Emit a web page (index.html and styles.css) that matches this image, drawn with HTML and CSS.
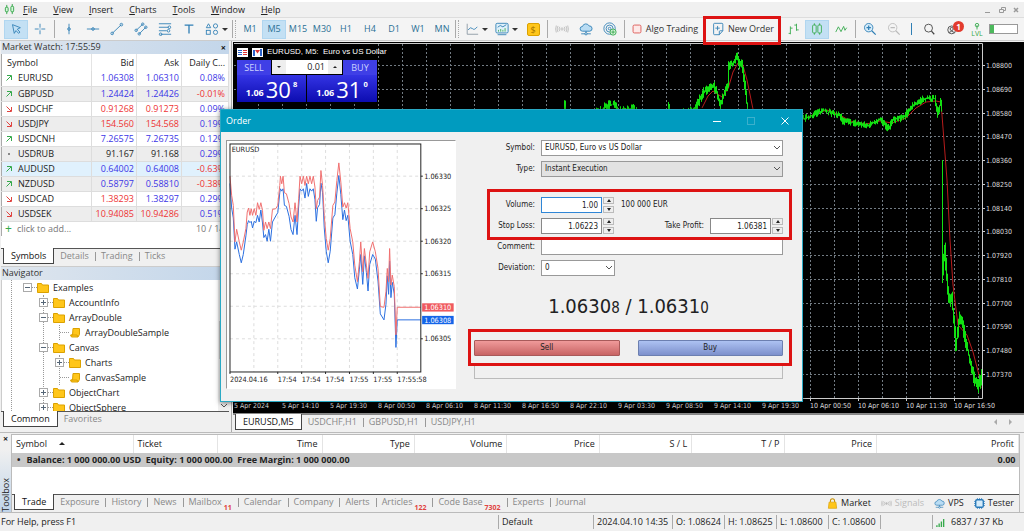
FILE: index.html
```html
<!DOCTYPE html>
<html lang="en">
<head>
  <meta charset="UTF-8" />
  <meta name="viewport" content="width=device-width, initial-scale=1.0" />
  <title>Trading Terminal</title>
  <link rel="stylesheet" href="styles.css">
</head>
<body>
  <svg class="defs" aria-hidden="true">
    <symbol id="folder" viewBox="0 0 12 11"><path d="M.5 1.5h4l1 1.5h6v7.5H.5z" fill="#ffc61a" stroke="#dba100" /></symbol>
    <symbol id="script" viewBox="0 0 12 11"><path d="M4 1.5h6.5v6L9 10H2.500L1.500 8h2z" fill="#ffc61a" stroke="#dba100" /><path d="M2 8h6l1 2" fill="none" stroke="#dba100" /></symbol>
    <symbol id="up" viewBox="0 0 8 8"><path d="M1.500 6.500L6 2M2 1.500h4.500V6" fill="none" stroke="#35a94b" /></symbol>
    <symbol id="down" viewBox="0 0 8 8"><path d="M1.500 1.500L6 6M6.500 2v4.500H2" fill="none" stroke="#e0433f" /></symbol>
    <symbol id="flat" viewBox="0 0 8 8"><rect x="3" y="3" width="2" height="2" fill="#888" /></symbol>
    <symbol id="chevron" viewBox="0 0 8 6"><path d="M1 1l3 3 3-3" fill="none" stroke="#555" /></symbol>
    <symbol id="cloud" viewBox="0 0 16 16"><path d="M4 10.500a2.700 2.700 0 0 1 0-5.400A4 4 0 0 1 11.500 4.500a3 3 0 0 1 .8 6z" fill="#b9dcf3" stroke="#2f7fb5" /><path d="M8 10.500v3M2.500 13.500h11" stroke="#2f7fb5" fill="none" /><circle cx="8" cy="13.500" r="1.300" fill="#fff" stroke="#2f7fb5" /></symbol>
    <symbol id="signal" viewBox="0 0 16 16"><circle cx="8" cy="8" r="1.300" /><path d="M5.500 5.500q-1.800 2.500 0 5M10.500 5.500q1.800 2.500 0 5M3.500 4.500q-2.200 3.500 0 7M12.500 4.500q2.200 3.500 0 7M1.500 4q-1.500 4 0 8M14.500 4q1.500 4 0 8" fill="none" /></symbol>
  </svg>

  <div class="app">
    <nav class="menubar">
      <svg class="logo" viewBox="0 0 12 12"><path d="M3 1v10M9 0v11" /><rect x="1.500" y="3.500" width="3" height="5" rx="1" /><rect x="7.500" y="2.500" width="3" height="6" rx="1" /></svg>
      <a href="#"><u>F</u>ile</a>
      <a href="#"><u>V</u>iew</a>
      <a href="#"><u>I</u>nsert</a>
      <a href="#"><u>C</u>harts</a>
      <a href="#"><u>T</u>ools</a>
      <a href="#"><u>W</u>indow</a>
      <a href="#"><u>H</u>elp</a>
      <div class="window-controls">
        <button aria-label="Minimize"><svg viewBox="0 0 8 8"><path d="M1 6.500h5" /></svg></button>
        <button aria-label="Restore"><svg viewBox="0 0 8 8"><path d="M3.500 3V1.500h4v3H6M1.500 3.500h4v3h-4z" /></svg></button>
        <button aria-label="Close"><svg viewBox="0 0 8 8"><path d="M2 2l4 4M6 2L2 6" stroke-width="1.500" /></svg></button>
      </div>
    </nav>

    <div class="toolbar">
      <button class="tool active" aria-label="Cursor"><svg viewBox="0 0 16 16"><path d="M4 3l9 3.500-3.500 1.800 3 3.200-1.500 1.500-3-3.200L6 13z" /></svg></button>
      <button class="tool" aria-label="Crosshair"><svg viewBox="0 0 16 16"><path d="M8 2v4.500M8 9.500V14M2 8h4.500M9.500 8H14M8 7.500v1" /></svg></button>
      <span class="sep"></span>
      <button class="tool" aria-label="Vertical line"><svg viewBox="0 0 16 16"><path d="M8 2v12" /><circle cx="8" cy="8" r="1.500" /></svg></button>
      <button class="tool" aria-label="Horizontal line"><svg viewBox="0 0 16 16"><path d="M1 8h14" /><circle cx="8" cy="8" r="1.500" /></svg></button>
      <button class="tool" aria-label="Trendline"><svg viewBox="0 0 16 16"><path d="M2.500 13L13 3" /><circle cx="2.500" cy="13" r="1.500" /><circle cx="13" cy="3" r="1.500" /></svg></button>
      <button class="tool" aria-label="Channel"><svg viewBox="0 0 16 16"><path d="M2.500 9.500L10 2.500M6 13.500L13.500 6" /><circle cx="2.500" cy="9.500" r="1.400" /><circle cx="10" cy="2.500" r="1.400" /><circle cx="6" cy="13.500" r="1.400" /><circle cx="13.500" cy="6" r="1.400" /></svg></button>
      <button class="tool" aria-label="Fibonacci"><svg viewBox="0 0 16 16"><path d="M1 2h14M1 6h11M1 10h9M3 14h12" /><circle cx="13" cy="6" r="1.500" /><circle cx="3" cy="14" r="1.500" /><circle cx="12" cy="10" r="1.500" /></svg></button>
      <button class="tool" aria-label="Text"><svg viewBox="0 0 16 16"><path d="M3 3.500h10M8 3.500V13" stroke-width="1.500" /></svg></button>
      <button class="tool drop" aria-label="Shapes"><svg viewBox="0 0 16 16"><path d="M4 2l2.500 4.500h-5z" /><circle cx="12" cy="4.500" r="2.400" /><rect x="1.500" y="9.500" width="4.500" height="4.500" /><circle cx="12" cy="11.800" r="2.400" /></svg><i class="caret"></i></button>
      <span class="grip"></span>
      <button class="tool frame">M1</button>
      <button class="tool frame active">M5</button>
      <button class="tool frame">M15</button>
      <button class="tool frame">M30</button>
      <button class="tool frame">H1</button>
      <button class="tool frame">H4</button>
      <button class="tool frame">D1</button>
      <button class="tool frame">W1</button>
      <button class="tool frame">MN</button>
      <span class="grip"></span>
      <button class="tool drop" aria-label="Chart type"><svg viewBox="0 0 16 16"><path d="M2.500 2v12H15" stroke="#8a98a4" /><path d="M3.500 9q3-4 5-1.500t5.500-2" /></svg><i class="caret"></i></button>
      <button class="tool drop" aria-label="Indicators"><svg viewBox="0 0 16 16"><rect x="1" y="1.500" width="14" height="11" rx="1.500" fill="#dff0fa" /><path d="M3 14.500h10" /><path d="M3 6l3-2 3 1.500L13 3" /><path d="M4 11V9M6.500 11V8M9 11V9M11.500 11V7" stroke="#3fae55" /></svg><i class="caret"></i></button>
      <button class="tool money" aria-label="Depth of market"><span>$</span></button>
      <span class="sep"></span>
      <button class="tool muted" aria-label="Signals"><svg viewBox="0 0 16 16"><use href="#signal" /></svg></button>
      <button class="tool" aria-label="Virtual hosting"><svg viewBox="0 0 16 16"><use href="#cloud" /></svg></button>
      <button class="tool" aria-label="Add service"><svg viewBox="0 0 16 16"><circle cx="7.500" cy="7.500" r="6.500" /><circle cx="7.500" cy="7.500" r="4" /><circle cx="7.500" cy="7.500" r="1.500" /><circle cx="11.500" cy="11.500" r="3.500" fill="#d5f3d8" stroke="#35a94b" /><path d="M9.500 11.500h4M11.500 9.500v4" stroke="#35a94b" /></svg></button>
      <span class="sep"></span>
      <button class="tool wide algo"><svg viewBox="0 0 16 16"><rect x="3.500" y="3.500" width="9" height="9" rx="1.500" fill="#fde9e8" stroke="#dc5350" /></svg>Algo Trading</button>
      <button class="tool wide new-order"><svg viewBox="0 0 16 16"><path d="M4 1.500h8.500q1 0 1 1V10l-4 4.500H4q-1 0-1-1v-11q0-1 1-1zM13.500 10h-3q-1 0-1 1v3.500M7.500 4.500v5M5 7h5" /></svg>New Order</button>
      <button class="tool green" aria-label="Bars"><svg viewBox="0 0 16 16"><path d="M5 5v9M5 7h2.500M3 13h2M12 2v8M9.500 3.500H12M12 9h2.500" /></svg></button>
      <button class="tool green active" aria-label="Candles"><svg viewBox="0 0 16 16"><path d="M5 1.500v13M11 1.500v13" /><rect x="3" y="3.500" width="4" height="9" rx="1" fill="#cfe8f8" /><rect x="9" y="3.500" width="4" height="9" rx="1" fill="#cfe8f8" /></svg></button>
      <button class="tool green" aria-label="Line"><svg viewBox="0 0 16 16"><path d="M2 11.500L5 5.500l3 5.500 3-6 1.500 4.500 2-3" /></svg></button>
      <span class="sep"></span>
      <button class="tool" aria-label="Zoom in"><svg viewBox="0 0 16 16"><circle cx="6.500" cy="6.500" r="4.800" fill="#d6ecfa" /><path d="M10 10l4.500 4.500M4 6.500h5M6.500 4v5" stroke-width="1.400" /></svg></button>
      <button class="tool muted" aria-label="Zoom out"><svg viewBox="0 0 16 16"><circle cx="6.500" cy="6.500" r="4.800" /><path d="M10 10l4.500 4.500M4 6.500h5" stroke-width="1.400" /></svg></button>
      <span class="sep blue"></span>
      <button class="tool dark" aria-label="Search"><svg viewBox="0 0 16 16"><circle cx="7.500" cy="7" r="4.500" /><path d="M10.800 10.500L14 14" stroke-width="1.400" /></svg></button>
      <button class="tool dark news" aria-label="Notifications"><svg viewBox="0 0 16 16"><circle cx="6.500" cy="9" r="4.500" /><circle cx="6.500" cy="8" r="1.800" /><path d="M3.500 12q3-3 6 0" /></svg><b class="badge">1</b></button>
      <button class="tool green lvl" aria-label="Level"><svg viewBox="0 0 16 8"><circle cx="8" cy="3" r="2" /><path d="M8 3v5" /></svg><span>LVL</span></button>
      <progress class="level" max="100" value="14" aria-label="Level progress"></progress>
    </div>

    <div class="workspace">
      <aside class="sidebar">
        <section class="panel">
          <h2 class="panel-title">Market Watch: 17:55:59 <button aria-label="Close Market Watch">×</button></h2>
          <table class="quotes">
            <thead><tr><th>Symbol</th><th>Bid</th><th>Ask</th><th>Daily C...</th></tr></thead>
            <tbody id="quotes"></tbody>
            <tfoot><tr><td colspan="2"><span class="plus">+</span>click to add...</td><td colspan="2">10 / 14</td></tr></tfoot>
          </table>
          <div class="tabs market-tabs">
            <button class="tab active">Symbols</button><button class="tab">Details</button><button class="tab">Trading</button><button class="tab">Ticks</button>
          </div>
        </section>

        <section class="panel navigator">
          <h2 class="panel-title">Navigator</h2>
          <div class="tree-view">
            <ul class="tree">
              <li><div class="node"><i class="box minus"></i><i class="dash"></i><svg><use href="#folder" /></svg>Examples</div>
                <ul>
                  <li><div class="node"><i class="box"></i><i class="dash"></i><svg><use href="#folder" /></svg>AccountInfo</div></li>
                  <li><div class="node"><i class="box minus"></i><i class="dash"></i><svg><use href="#folder" /></svg>ArrayDouble</div>
                    <ul>
                      <li><div class="node leaf"><i class="dash"></i><svg><use href="#script" /></svg>ArrayDoubleSample</div></li>
                    </ul>
                  </li>
                  <li><div class="node"><i class="box minus"></i><i class="dash"></i><svg><use href="#folder" /></svg>Canvas</div>
                    <ul>
                      <li><div class="node"><i class="box"></i><i class="dash"></i><svg><use href="#folder" /></svg>Charts</div></li>
                      <li><div class="node leaf"><i class="dash"></i><svg><use href="#script" /></svg>CanvasSample</div></li>
                    </ul>
                  </li>
                  <li><div class="node"><i class="box"></i><i class="dash"></i><svg><use href="#folder" /></svg>ObjectChart</div></li>
                  <li><div class="node"><i class="box"></i><i class="dash"></i><svg><use href="#folder" /></svg>ObjectSphere</div></li>
                </ul>
              </li>
            </ul>
            <div class="scrollbar"><i></i><svg viewBox="0 0 8 6"><use href="#chevron" /></svg></div>
          </div>
          <div class="tabs">
            <button class="tab active">Common</button><button class="tab">Favorites</button>
          </div>
        </section>
      </aside>

      <main class="chart-area">
        <div class="chart">
          <svg id="chart" viewBox="233 42 791 371" preserveAspectRatio="xMinYMin meet"></svg>
          <div class="one-click">
            <div class="chart-name">
              <svg viewBox="0 0 26 9"><rect width="11" height="9" fill="#fff" /><path d="M1 2.500h4M1 4.500h4M1 6.500h4" stroke="#2b62c9" /><path d="M6 2.500h4M6 4.500h4M6 6.500h4" stroke="#d33" /><rect x="15" width="11" height="9" fill="#fff" /><path d="M17 2v6M24 1v7" stroke="#2b62c9" stroke-width="2" /><path d="M18 2h5l-2.500 3.500z" fill="#d33" /></svg>
              EURUSD, M5:&nbsp; Euro vs US Dollar
            </div>
            <div class="deal">
              <button class="side">SELL</button>
              <div class="lot">
                <button aria-label="Decrease volume"><i class="caret"></i></button>
                <input type="text" value="0.01" aria-label="Lots">
                <button aria-label="Increase volume"><i class="caret up"></i></button>
              </div>
              <button class="side">BUY</button>
              <div class="quote"><b>1.06</b><span>30</span><sup>8</sup></div>
              <div class="quote"><b>1.06</b><span>31</span><sup>0</sup></div>
            </div>
          </div>
        </div>
        <div class="tabs chart-tabs">
          <button class="tab active">EURUSD,M5</button><button class="tab">USDCHF,H1</button><button class="tab">GBPUSD,H1</button><button class="tab">USDJPY,H1</button>
          <span class="arrows"><i></i><i></i></span>
        </div>
      </main>
    </div>

    <section class="toolbox">
      <div class="toolbox-side"><button aria-label="Close Toolbox">×</button><span>Toolbox</span></div>
      <div class="toolbox-main">
        <table class="trades">
          <colgroup><col class="c-symbol"><col class="c-ticket"><col class="c-time"><col><col><col><col><col><col><col class="c-profit"></colgroup>
          <thead><tr><th>Symbol <i class="caret up"></i></th><th>Ticket</th><th>Time</th><th>Type</th><th>Volume</th><th>Price</th><th>S / L</th><th>T / P</th><th>Price</th><th>Profit</th></tr></thead>
          <tbody><tr><td colspan="9"><span class="dot">•</span>Balance: 1 000 000.00 USD&nbsp; Equity: 1 000 000.00&nbsp; Free Margin: 1 000 000.00</td><td>0.00</td></tr></tbody>
        </table>
        <div class="tabs toolbox-tabs">
          <button class="tab active">Trade</button><button class="tab">Exposure</button><button class="tab">History</button><button class="tab">News</button><button class="tab">Mailbox<sub>11</sub></button><button class="tab">Calendar</button><button class="tab">Company</button><button class="tab">Alerts</button><button class="tab">Articles<sub>122</sub></button><button class="tab">Code Base<sub>7302</sub></button><button class="tab">Experts</button><button class="tab">Journal</button>
          <div class="services">
            <a href="#"><svg viewBox="0 0 16 16"><path d="M5 6V4a3 3 0 0 1 6 0v2" fill="none" stroke="#c99200" stroke-width="1.500" /><path d="M3 6h10l1 9H2z" fill="#ffc61a" stroke="#dba100" /></svg>Market</a>
            <a href="#" class="off"><svg viewBox="0 0 16 16"><use href="#signal" /></svg>Signals</a>
            <a href="#"><svg viewBox="0 0 16 16"><use href="#cloud" /></svg>VPS</a>
            <a href="#"><svg viewBox="0 0 16 16"><rect x="2.500" y="2.500" width="11" height="11" rx="2" fill="#d6ecfa" stroke="#2678b8" stroke-width="2" /><path d="M5 0v2M8 0v2M11 0v2M5 14v2M8 14v2M11 14v2M0 5h2M0 8h2M0 11h2M14 5h2M14 8h2M14 11h2" stroke="#2678b8" /></svg>Tester</a>
          </div>
        </div>
      </div>
    </section>

    <footer class="statusbar">
      <span class="help">For Help, press F1</span>
      <span class="profile">Default</span>
      <span class="date">2024.04.10 14:35</span>
      <span>O: 1.08624</span>
      <span>H: 1.08625</span>
      <span>L: 1.08600</span>
      <span>C: 1.08600</span>
      <span class="blank"></span>
      <span class="traffic"><svg viewBox="0 0 10 10"><path d="M1 8v2M3.500 6v4M6 4v6M8.500 1v9" stroke="#35a94b" stroke-width="1.500" /></svg>6837 / 37 Kb</span>
    </footer>
  </div>

  <div class="dialog" role="dialog" aria-label="Order">
    <header class="dialog-title">
      <span>Order</span>
      <button aria-label="Minimize"><svg viewBox="0 0 10 10"><path d="M1 5.500h8" /></svg></button>
      <button aria-label="Maximize" disabled><svg viewBox="0 0 10 10"><rect x="1.500" y="1.500" width="7" height="7" /></svg></button>
      <button aria-label="Close"><svg viewBox="0 0 10 10"><path d="M1.500 1.500l7 7M8.500 1.500l-7 7" /></svg></button>
    </header>
    <div class="dialog-body">
      <div class="tick-chart"><svg id="ticks" viewBox="21 106 687 744"></svg></div>
      <form class="order-form">
        <div class="row">
          <label for="symbol">Symbol:</label>
          <div class="select"><select id="symbol"><option>EURUSD, Euro vs US Dollar</option></select><svg><use href="#chevron" /></svg></div>
        </div>
        <div class="row">
          <label for="type">Type:</label>
          <div class="select gray"><select id="type"><option>Instant Execution</option></select><svg><use href="#chevron" /></svg></div>
        </div>
        <div class="levels">
          <div class="row">
            <label for="volume">Volume:</label>
            <div class="spin focus"><input id="volume" type="text" value="1.00"><div><button type="button" aria-label="Volume up"><i class="caret up"></i></button><button type="button" aria-label="Volume down"><i class="caret"></i></button></div></div>
            <span class="units">100 000 EUR</span>
          </div>
          <div class="row">
            <label for="sl">Stop Loss:</label>
            <div class="spin"><input id="sl" type="text" value="1.06223"><div><button type="button" aria-label="Stop loss up"><i class="caret up"></i></button><button type="button" aria-label="Stop loss down"><i class="caret"></i></button></div></div>
            <label for="tp" class="tp">Take Profit:</label>
            <div class="spin"><input id="tp" type="text" value="1.06381"><div><button type="button" aria-label="Take profit up"><i class="caret up"></i></button><button type="button" aria-label="Take profit down"><i class="caret"></i></button></div></div>
          </div>
        </div>
        <div class="row">
          <label for="comment">Comment:</label>
          <input id="comment" class="comment" type="text">
        </div>
        <div class="row">
          <label for="deviation">Deviation:</label>
          <div class="select small"><select id="deviation"><option>0</option></select><svg><use href="#chevron" /></svg></div>
        </div>
        <p class="price">1.0630<small>8</small> / 1.0631<small>0</small></p>
        <div class="actions">
          <button type="button" class="sell">Sell</button>
          <button type="button" class="buy">Buy</button>
        </div>
        <output class="result"></output>
      </form>
    </div>
  </div>

  <script src="script.js"></script>
</body>
</html>
```
FILE: styles.css
```css
* {
  box-sizing: border-box;
}
body {
  margin: 0;
  font-family: "Open Sans", "Noto Sans", sans-serif;
  font-size: 9px;
  line-height: 12px;
  color: #222;
  background: #f0f0f0;
}
button, input, select {
  margin: 0;
  padding: 0;
  border: 0;
  border-radius: 0;
  background: none;
  font: inherit;
  color: inherit;
}
a {
  color: inherit;
  text-decoration: none;
}
svg {
  display: block;
  flex: none;
}
.defs {
  display: none;
}
.app {
  display: flex;
  flex-direction: column;
  height: 100vh;
  min-height: 531px;
  overflow: hidden;
}
.caret {
  display: inline-block;
  border: 3px solid transparent;
  border-top-color: currentColor;
  border-bottom: 0;
}
.caret.up {
  border-top: 0;
  border-bottom: 3px solid currentColor;
}

/* Menu and toolbar */
.menubar {
  display: flex;
  align-items: center;
  gap: 16px;
  height: 18px;
  padding: 0 4px;
  border-top: 2px solid #fff;
  border-bottom: 1px solid #ddd;
}
.logo {
  width: 11px;
  height: 11px;
  margin-right: -8px;
  fill: #d9f5dc;
  stroke: #2fa545;
}
.window-controls {
  display: flex;
  gap: 6px;
  margin-left: auto;
}
.window-controls svg {
  width: 8px;
  height: 8px;
  fill: none;
  stroke: #999;
}
.toolbar {
  display: flex;
  align-items: center;
  height: 23px;
  padding-left: 4px;
  border-bottom: 1px solid #ccc;
  background: #f4f4f4;
}
.tool {
  display: flex;
  flex: none;
  align-items: center;
  justify-content: center;
  width: 24px;
  height: 19px;
  border: 1px solid transparent;
  color: #2b7095;
}
.tool svg {
  width: 14px;
  height: 14px;
  fill: none;
  stroke: #2f7fb5;
}
.tool.active {
  background: #c3e0f4;
  border-color: #b0d6f0;
}
.tool.drop {
  width: 30px;
  gap: 3px;
}
.tool.drop .caret {
  color: #333;
}
.tool.muted svg {
  stroke: #bbb;
}
.tool.green svg {
  stroke: #35a94b;
}
.tool.dark svg {
  stroke: #444;
}
.money span {
  width: 13px;
  height: 13px;
  border: 1px solid #dba100;
  border-radius: 2px;
  background: #ffc61a;
  color: #a87400;
}
.sep, .grip {
  flex: none;
  width: 1px;
  height: 18px;
  margin: 0 2px;
  background: #aaa;
}
.grip {
  width: 4px;
  margin: 0 2px 0 1px;
  border-left: 1px solid #aaa;
  border-right: 1px dotted #aaa;
  background: none;
}
.sep.blue {
  height: 12px;
  margin: 0 5px;
  background: #2f7fb5;
}
.tool.wide {
  position: relative;
  width: 77px;
  gap: 3px;
  color: #333;
}
.tool.wide.algo {
  gap: 2px;
  padding-right: 3px;
}
.new-order::after {
  content: "";
  position: absolute;
  inset: -5px -1px -7px -2px;
  border: 3px solid #dd1313;
  z-index: 2;
}
.news {
  position: relative;
}
.badge {
  position: absolute;
  top: 0;
  right: 0;
  width: 11px;
  height: 11px;
  border-radius: 50%;
  background: #e23b2e;
  color: #fff;
  font-size: 8px;
  line-height: 11px;
}
.tool.lvl {
  flex-direction: column;
  color: #35a94b;
  font-size: 7px;
  line-height: 7px;
}
.lvl svg {
  height: 8px;
}
.level {
  appearance: none;
  width: 32px;
  height: 10px;
  margin: 0 6px 0 auto;
  border: 1px solid #999;
  background: #fff;
}
.level::-webkit-progress-bar {
  background: #fff;
}
.level::-webkit-progress-value {
  background: #4cb95c;
}

/* Tabs */
.tabs {
  display: flex;
  flex: none;
  align-items: flex-start;
  height: 18px;
  padding-left: 2px;
  background: #f0f0f0;
  border-top: 1px solid #555;
}
.tab {
  display: flex;
  align-items: center;
  height: 14px;
  padding: 0 6px;
  color: #888;
}
.tab + .tab + .tab {
  background: linear-gradient(#999, #999) left center / 1px 9px no-repeat;
}
.tab.active {
  height: 16px;
  margin-top: -1px;
  padding: 0 7px;
  border: 1px solid #444;
  border-top: 0;
  background: #fff;
  color: #111;
}
.tab sub {
  align-self: flex-end;
  margin: 0 0 -3px 2px;
  color: #e0433f;
  font-size: 7px;
  font-weight: bold;
  line-height: 9px;
}

/* Side panels */
.workspace {
  display: flex;
  flex: 1;
  min-height: 0;
}
.sidebar {
  display: flex;
  flex-direction: column;
  flex: none;
  width: 232px;
  padding: 0 2px 3px 1px;
  border-right: 1px solid #aaa;
}
.panel {
  display: flex;
  flex-direction: column;
}
.panel-title {
  display: flex;
  flex: none;
  justify-content: space-between;
  height: 13px;
  margin: 0;
  padding: 0 3px 0 1px;
  background: linear-gradient(90deg, #dfe6ee, #c3d6ea);
  color: #333;
  font-size: 9px;
  font-weight: normal;
}
.panel-title button {
  color: #111;
  font-weight: bold;
}
.quotes {
  width: 100%;
  table-layout: fixed;
  border-collapse: collapse;
  border-left: 1px solid #aaa;
  background: #fff;
}
.quotes th, .quotes td {
  height: 15px;
  padding: 0 2px;
  font-weight: normal;
  text-align: right;
  white-space: nowrap;
}
.quotes th {
  height: 17px;
  width: 45px;
  border-right: 1px solid #e4e4e4;
}
.quotes th:first-child {
  width: 90px;
  padding-left: 5px;
  text-align: left;
}
.quotes th:last-child, .quotes tbody td:last-child {
  padding-right: 3px;
}
.quotes th:last-child {
  width: auto;
}
.quotes tbody td {
  border-right: 1px solid #ddd;
  border-bottom: 1px solid #ddd;
}
.quotes tbody td:first-child {
  text-align: left;
}
.quotes tbody tr:nth-child(even) {
  background: #ededed;
}
.quotes tbody tr.selected {
  background: #e0f1fd;
}
.quotes td svg {
  display: inline-block;
  width: 8px;
  height: 8px;
  margin: 0 5px 0 1px;
  vertical-align: -1px;
}
.rise {
  color: #3b35e6;
}
.fall {
  color: #ee3434;
}
.quotes tfoot td {
  color: #777;
}
.quotes tfoot td:first-child {
  text-align: left;
}
.quotes tfoot td:last-child {
  padding-right: 4px;
}
.plus {
  margin: 0 5px 0 1px;
  color: #35a94b;
  font-size: 12px;
  vertical-align: -1px;
}
.market-tabs {
  margin-top: 12px;
  box-shadow: 0 -12px #fff;
}
.navigator {
  flex: 1;
  min-height: 0;
  border-top: 1px solid #ccc;
}
.tree-view {
  display: flex;
  flex: 1;
  min-height: 0;
  overflow: hidden;
  border-left: 1px solid #ccc;
  background: #fff;
}
.tree {
  flex: 1;
}
.tree, .tree ul {
  margin: 0 0 0 9px;
  padding: 0;
  border-left: 1px dotted #999;
  list-style: none;
}
.tree > li {
  padding-left: 16px;
}
.tree li ul {
  margin-left: 15px;
}
.node {
  display: flex;
  align-items: center;
  height: 15px;
}
.node svg {
  width: 12px;
  height: 11px;
  margin-right: 4px;
}
.node .box {
  width: 9px;
  height: 9px;
  margin-left: -5px;
  border: 1px solid #aaa;
  background:
    linear-gradient(#567, #567) center / 5px 1px no-repeat,
    linear-gradient(#567, #567) center / 1px 5px no-repeat,
    #fff;
}
.node .box.minus {
  background: linear-gradient(#567, #567) center / 5px 1px no-repeat, #fff;
}
.dash {
  width: 5px;
  border-top: 1px dotted #999;
}
.leaf .dash {
  width: 9px;
}
.scrollbar {
  display: flex;
  flex-direction: column;
  align-items: center;
  justify-content: flex-end;
  width: 11px;
  background: #f0f0f0;
}
.scrollbar i {
  width: 9px;
  height: 38px;
  margin-bottom: 44px;
  background: #cdcdcd;
}
.scrollbar svg {
  width: 8px;
  height: 6px;
  margin-bottom: 2px;
}

/* Chart */
.chart-area {
  display: flex;
  flex: 1;
  flex-direction: column;
  min-width: 0;
  padding: 1px 0 1px 1px;
}
.chart {
  position: relative;
  flex: 1;
  min-height: 0;
  background: #000;
  border-bottom: 1px solid #888;
}
.chart > svg {
  width: 100%;
  height: 100%;
}
.axis {
  fill: #ddd;
  font: 7px "DejaVu Sans Condensed", "DejaVu Sans", sans-serif;
}
.grid {
  stroke: #727b83;
  stroke-dasharray: 2 2;
}
.frame-line {
  fill: none;
  stroke: #ccc;
}
.price-line {
  fill: none;
  stroke: #12e012;
}
.average {
  fill: none;
  stroke: #b81c1c;
}
.one-click {
  position: absolute;
  top: 2px;
  left: 4px;
  width: 140px;
  background: #000;
  color: #fff;
}
.chart-name {
  display: flex;
  align-items: center;
  gap: 4px;
  height: 16px;
  font-family: "Liberation Sans", sans-serif;
  font-size: 8px;
  white-space: nowrap;
}
.chart-name svg {
  width: 26px;
  height: 9px;
}
.deal {
  display: grid;
  grid-template-columns: 34px 34px 1fr 34px;
  grid-template-rows: 15px 27px;
  column-gap: 1px;
}
.side {
  background: #3f3fe6;
  color: #cdd2ff;
}
.lot {
  display: flex;
  grid-column: span 2;
  align-items: stretch;
  margin-bottom: 1px;
  background: #fff;
  color: #222;
}
.lot input {
  flex: 1;
  width: 0;
  padding-right: 3px;
  text-align: right;
}
.lot button {
  width: 14px;
  background: #eee;
}
.lot .caret {
  display: block;
  width: 0;
  margin: 0 auto;
  border-width: 2px;
}
.lot .caret:not(.up) {
  border-bottom: 0;
}
.lot .caret.up {
  border-top: 0;
}
.quote {
  display: flex;
  grid-column: span 2;
  align-items: flex-end;
  justify-content: center;
  gap: 2px;
  padding-bottom: 3px;
  background: linear-gradient(#3434e4, #0c0cb0);
}
.quote span {
  font-size: 22px;
  line-height: 20px;
}
.quote sup {
  align-self: flex-start;
  margin-top: 3px;
  font-weight: bold;
}
.chart-tabs {
  height: 17px;
  border-top: 1px solid #888;
}
.arrows {
  display: flex;
  gap: 12px;
  margin: 4px 12px 0 auto;
}
.arrows i {
  border: 3px solid transparent;
  border-left: 0;
  border-right-color: #aaa;
}
.arrows i + i {
  border-left: 3px solid #aaa;
  border-right: 0;
}

/* Toolbox */
.toolbox {
  display: flex;
  min-height: 81px;
  padding: 1px 4px 0 0;
  border-top: 1px solid #bbb;
  border-bottom: 1px solid #bbb;
}
.toolbox-side {
  display: flex;
  flex-direction: column;
  align-items: center;
  justify-content: space-between;
  width: 11px;
  background: linear-gradient(#f0f0f0 20%, #bfd4ea);
}
.toolbox-side button {
  line-height: 9px;
  font-weight: bold;
}
.toolbox-side span {
  writing-mode: vertical-rl;
  transform: rotate(180deg);
}
.toolbox-main {
  display: flex;
  flex: 1;
  flex-direction: column;
  justify-content: space-between;
  min-width: 0;
  border: 1px solid #bbb;
  border-bottom: 0;
  background: #fff;
}
.trades {
  width: 100%;
  table-layout: fixed;
  border-collapse: collapse;
}
.c-symbol {
  width: 121px;
}
.c-ticket {
  width: 84px;
}
.c-time {
  width: 105px;
}
.c-profit {
  width: 142px;
}
.trades th {
  height: 18px;
  padding: 0 4px;
  border-right: 1px solid #e4e4e4;
  font-weight: normal;
  text-align: right;
}
.trades th:nth-child(-n+2) {
  text-align: left;
}
.trades th .caret {
  margin: 0 0 2px 10px;
}
.trades td {
  height: 14px;
  padding: 0 3px 0 5px;
  background: #c8c8c8;
  font-weight: bold;
}
.trades td:last-child {
  text-align: right;
}
.dot {
  margin-right: 6px;
}
.services {
  display: flex;
  gap: 10px;
  margin: 2px 5px 0 auto;
}
.services a {
  display: flex;
  align-items: center;
  gap: 3px;
}
.services svg {
  width: 11px;
  height: 11px;
}
.services .off {
  color: #bbb;
}
.off svg {
  fill: #bbb;
  stroke: #bbb;
}
.statusbar {
  display: flex;
  align-items: center;
  height: 18px;
}
.statusbar span {
  display: flex;
  align-items: center;
  height: 14px;
  padding: 0 3px;
  border-left: 1px solid #aaa;
  white-space: nowrap;
}
.statusbar .help {
  flex: 1;
  padding-left: 1px;
  border-left: 0;
}
.statusbar .profile {
  width: 95px;
}
.statusbar .date {
  width: 79px;
}
.statusbar span:not(.help, .profile, .date, .traffic) {
  width: 52px;
}
.statusbar .traffic {
  width: 92px;
}
.traffic svg {
  width: 9px;
  height: 9px;
  margin-right: 6px;
}

/* Order window */
.dialog {
  position: absolute;
  top: 109px;
  left: 220px;
  width: 583px;
  border: 1px solid #2aa9c4;
  background: #f0f0f0;
  box-shadow: 0 1px 5px rgba(0, 0, 0, 0.5);
  font-family: "DejaVu Sans Condensed", "DejaVu Sans", sans-serif;
  font-size: 8px;
}
.dialog-title {
  display: flex;
  align-items: center;
  height: 22px;
  padding: 0 0 0 5px;
  background: #009bbf;
  color: #fff;
  font-family: "Open Sans", sans-serif;
  font-size: 9px;
}
.dialog-title span {
  flex: 1;
}
.dialog-title button {
  display: flex;
  justify-content: center;
  width: 34px;
}
.dialog-title svg {
  width: 10px;
  height: 10px;
  fill: none;
  stroke: #fff;
}
.dialog-title button:disabled svg {
  stroke: #3bb0cc;
}
.dialog-body {
  display: flex;
  gap: 18px;
  padding: 8px 19px 12px 5px;
}
.tick-chart {
  flex: none;
  width: 230px;
  border: 1px solid #999;
  border-right-color: #fff;
  border-bottom-color: #fff;
  background: #fff;
}
.tick-chart svg {
  width: 100%;
}
.tick-label {
  fill: #222;
  font: 22px "DejaVu Sans Condensed", "DejaVu Sans", sans-serif;
}
.tick-label.light {
  fill: #fff;
}
.tick-grid {
  stroke: #ddd;
  stroke-width: 3;
  stroke-dasharray: 9 9;
}
.order-form {
  flex: 1;
}
.row {
  display: flex;
  align-items: center;
  height: 16px;
  margin-bottom: 5px;
}
.row label {
  width: 61px;
  margin-right: 6px;
  text-align: right;
}
.select {
  position: relative;
  flex: 1;
}
.select select {
  display: block;
  appearance: none;
  width: 100%;
  height: 16px;
  padding-left: 3px;
  border: 1px solid #999;
  background: #fff;
}
.select.gray select {
  background: #e2e2e2;
}
.select.small {
  flex: none;
  width: 74px;
}
.select svg {
  position: absolute;
  top: 5px;
  right: 2px;
  width: 8px;
  height: 6px;
  pointer-events: none;
}
.levels {
  position: relative;
  margin: 20px 0 0;
}
.levels::after {
  content: "";
  position: absolute;
  inset: -8px -9px -6px 13px;
  border: 3px solid #dd1313;
  pointer-events: none;
}
.spin {
  display: flex;
  gap: 1px;
}
.spin input {
  width: 61px;
  height: 16px;
  padding-right: 3px;
  border: 1px solid #888;
  background: #fff;
  text-align: right;
}
.spin.focus input {
  border-color: #2f86d6;
}
.spin div {
  display: flex;
  flex-direction: column;
  justify-content: space-between;
}
.spin button {
  display: flex;
  align-items: center;
  justify-content: center;
  width: 11px;
  height: 7px;
  border: 1px solid #bbb;
  background: #eee;
}
.spin .caret {
  border-left-width: 2px;
  border-right-width: 2px;
}
.units {
  margin-left: 7px;
}
.row .tp {
  flex: 1;
}
.comment {
  flex: 1;
  height: 16px;
  border: 1px solid #999;
  background: #fff;
}
.price {
  margin: 18px 0 20px;
  font-size: 20px;
  line-height: 24px;
  text-align: center;
}
.price small {
  font-size: 15px;
}
.actions {
  position: relative;
  display: grid;
  grid-template-columns: 1fr 1fr;
  gap: 18px;
}
.actions::after {
  content: "";
  position: absolute;
  inset: -11px -9px -10px -6px;
  border: 3px solid #dd1313;
  pointer-events: none;
}
.actions button {
  height: 16px;
  border: 1px solid #a85a5a;
  border-radius: 1px;
  background: linear-gradient(#f09a9a, #c86464);
}
.actions .buy {
  border-color: #6c7fb0;
  background: linear-gradient(#adc2f2, #7d90cc);
}
.result {
  display: block;
  height: 14px;
  margin-top: 9px;
  border: 1px solid #bbb;
}
```
FILE: script.js
```js
const quotes = [
  ['EURUSD', 'up', '1.06308', 'rise', '1.06310', 'rise', '0.08%'],
  ['GBPUSD', 'up', '1.24424', 'rise', '1.24426', 'rise', '-0.01%'],
  ['USDCHF', 'down', '0.91268', 'fall', '0.91273', 'fall', '0.09%'],
  ['USDJPY', 'down', '154.560', 'fall', '154.568', 'fall', '0.19%'],
  ['USDCNH', 'up', '7.26575', 'rise', '7.26735', 'rise', '0.12%'],
  ['USDRUB', 'flat', '91.167', '', '91.168', '', '0.29%'],
  ['AUDUSD', 'up', '0.64002', 'rise', '0.64008', 'rise', '-0.63%'],
  ['NZDUSD', 'up', '0.58797', 'rise', '0.58810', 'rise', '-0.38%'],
  ['USDCAD', 'down', '1.38293', 'fall', '1.38297', 'rise', '0.29%'],
  ['USDSEK', 'down', '10.94085', 'fall', '10.94286', 'fall', '0.51%']
];

document.getElementById('quotes').innerHTML = quotes.map(q => `
  <tr class="${q[0] === 'AUDUSD' ? 'selected' : ''}">
    <td><svg><use href="#${q[1]}" /></svg>${q[0]}</td>
    <td class="${q[3]}">${q[2]}</td>
    <td class="${q[5]}">${q[4]}</td>
    <td class="${q[6][0] === '-' ? 'fall' : 'rise'}">${q[6]}</td>
  </tr>`).join('');

// Small repeatable generator so the bars look the same on every load
let seed = 7;
function rand() {
  seed = (seed * 16807) % 2147483647;
  return seed / 2147483647;
}

// Turn a list of key points into a run of short high/low bars
function bars(points, spread) {
  let d = '';
  for (let i = 1; i < points.length; i++) {
    const [x1, y1] = points[i - 1];
    const [x2, y2] = points[i];
    for (let x = x1; x < x2; x++) {
      const y = y1 + (y2 - y1) * (x - x1) / (x2 - x1);
      const next = y1 + (y2 - y1) * (x + 1 - x1) / (x2 - x1);
      const top = Math.min(y, next) - rand() * spread;
      const bottom = Math.max(y, next) + rand() * spread;
      d += `M${x + 0.5} ${top.toFixed(1)}V${bottom.toFixed(1)}`;
    }
  }
  return d;
}

function drawChart() {
  let out = '';
  for (let x = 258; x <= 978; x += 24) {
    out += `<path class="grid" d="M${x + 0.5} 44V398" />`;
  }
  for (let i = 0; i < 14; i++) {
    const y = Math.round(65 + i * 23.77);
    out += `<path class="grid" d="M234 ${y + 0.5}H982" />`;
    out += `<path class="frame-line" d="M982 ${y + 0.5}h3" />`;
    out += `<text class="axis" x="986" y="${y + 3}">${(1.088 - i * 0.0011).toFixed(5)}</text>`;
  }
  out += '<path class="frame-line" d="M234 43.500H982.500V398.500H234" />';

  const times = ['5 Apr 2024', '5 Apr 14:10', '5 Apr 19:30', '8 Apr 00:50', '8 Apr 06:10', '8 Apr 11:30',
    '8 Apr 16:50', '8 Apr 22:10', '9 Apr 03:30', '9 Apr 08:50', '9 Apr 14:10', '9 Apr 19:30',
    '10 Apr 00:50', '10 Apr 06:10', '10 Apr 11:30', '10 Apr 16:50'];
  times.forEach((t, i) => {
    out += `<path class="frame-line" d="M${234.5 + i * 48} 398v3" />`;
    out += `<text class="axis" x="${234 + i * 48}" y="408">${t}</text>`;
  });

  out += '<path class="average" d="M702 108L708 96L713 91L722 97L728 89L733 72L738 63L742 62L747 80L754 114M803 119L815 114L827 110L840 115L850 121L866 124L880 121L892 123L906 118L916 108L926 102L936 101L941 102L947 180L950 240L953 285L958 325L967 335L973 352L979 375L981 388" />';

  const left = [[560, 117], [564, 113], [565, 104], [566, 117], [594, 114], [603, 109], [608, 105], [614, 104], [618, 110], [624, 109], [634, 109], [638, 114], [667, 114], [669, 105], [671, 117], [695, 110], [698, 103], [704, 92], [714, 86], [718, 95], [720, 106], [725, 93], [728, 85], [729, 66], [734, 62], [737, 57], [740, 66], [742, 64], [745, 85], [748, 112]];
  const right = [[803, 119], [810, 117], [816, 113], [825, 110], [833, 114], [840, 115], [843, 121], [855, 123], [868, 126], [880, 119], [884, 123], [888, 130], [893, 120], [905, 117], [912, 106], [918, 102], [926, 98], [935, 99], [938, 115], [941, 101], [942, 110]];
  const fall = [[943, 270], [945, 250], [947, 275], [949, 300], [952, 297], [956, 347], [960, 315], [964, 332], [969, 355], [974, 377], [978, 386], [980, 381], [982, 375]];
  out += `<path class="price-line" d="${bars(left, 5)}${bars(right, 4)}M942.5 160V283${bars(fall, 8)}" />`;
  document.getElementById('chart').innerHTML = out;
}

function drawTicks() {
  let out = '';
  for (let x = 102; x < 600; x += 72) {
    out += `<path class="tick-grid" d="M${x} 115V802" />`;
  }
  const prices = ['1.06330', '1.06325', '1.06320', '1.06315', '', '1.06305'];
  prices.forEach((p, i) => {
    const y = 212 + i * 98;
    out += `<path class="tick-grid" d="M30 ${y}H605" />`;
    if (p) {
      out += `<path d="M605 ${y}h6" stroke="#222" stroke-width="3" /><text class="tick-label" x="615" y="${y + 8}">${p}</text>`;
    }
  });
  const times = [['2024.04.16', 30], ['17:54', 174], ['17:54', 246], ['17:54', 318], ['17:55', 390], ['17:55', 462], ['17:55:58', 534]];
  times.forEach(([t, x]) => {
    out += `<path d="M${x} 802v6" stroke="#222" stroke-width="3" /><text class="tick-label" x="${x}" y="832">${t}</text>`;
  });

  const ask = [[30, 212], [35, 270], [40, 300], [45, 410], [50, 372], [58, 410], [64, 435], [70, 410], [78, 370], [82, 320], [86, 308], [90, 330], [94, 310], [98, 330], [103, 310], [108, 330], [113, 292], [118, 312], [123, 292], [128, 315], [132, 375], [137, 350], [142, 370], [147, 350], [152, 370], [158, 312], [168, 310], [174, 300], [180, 240], [182, 212], [186, 235], [190, 212], [194, 262], [200, 265], [208, 295], [214, 335], [220, 350], [226, 292], [232, 350], [237, 280], [241, 212], [246, 235], [251, 212], [256, 240], [261, 212], [266, 235], [271, 212], [276, 235], [281, 212], [286, 245], [290, 310], [294, 285], [300, 275], [304, 195], [309, 240], [314, 330], [320, 400], [326, 435], [332, 400], [340, 300], [346, 290], [352, 225], [358, 172], [364, 230], [370, 305], [375, 292], [380, 308], [385, 292], [392, 370], [400, 410], [406, 480], [414, 530], [420, 470], [424, 410], [430, 500], [435, 430], [441, 480], [446, 520], [451, 440], [460, 410], [468, 440], [476, 490], [483, 605], [494, 607], [500, 560], [504, 490], [508, 530], [511, 430], [515, 540], [519, 510], [525, 545], [530, 690], [534, 607], [605, 607]];
  const bid = ask.map(([x, y]) => [x, x > 530 ? y + 38 : y + (x % 3 ? 38 : 22)]);
  out += `<path d="M${bid.join('L')}" fill="none" stroke="#2a6fe0" stroke-width="3" />`;
  out += `<path d="M${ask.join('L')}" fill="none" stroke="#f07070" stroke-width="3" />`;

  out += '<rect x="30" y="115" width="575" height="687" fill="none" stroke="#222" stroke-width="3" />';
  out += '<text class="tick-label" x="35" y="138">EURUSD</text>';
  out += '<rect x="609" y="595" width="95" height="25" fill="#f05a5f" /><text class="tick-label light" x="615" y="615">1.06310</text>';
  out += '<rect x="609" y="633" width="95" height="25" fill="#1464e8" /><text class="tick-label light" x="615" y="653">1.06308</text>';
  document.getElementById('ticks').innerHTML = out;
}

drawChart();
drawTicks();
```
